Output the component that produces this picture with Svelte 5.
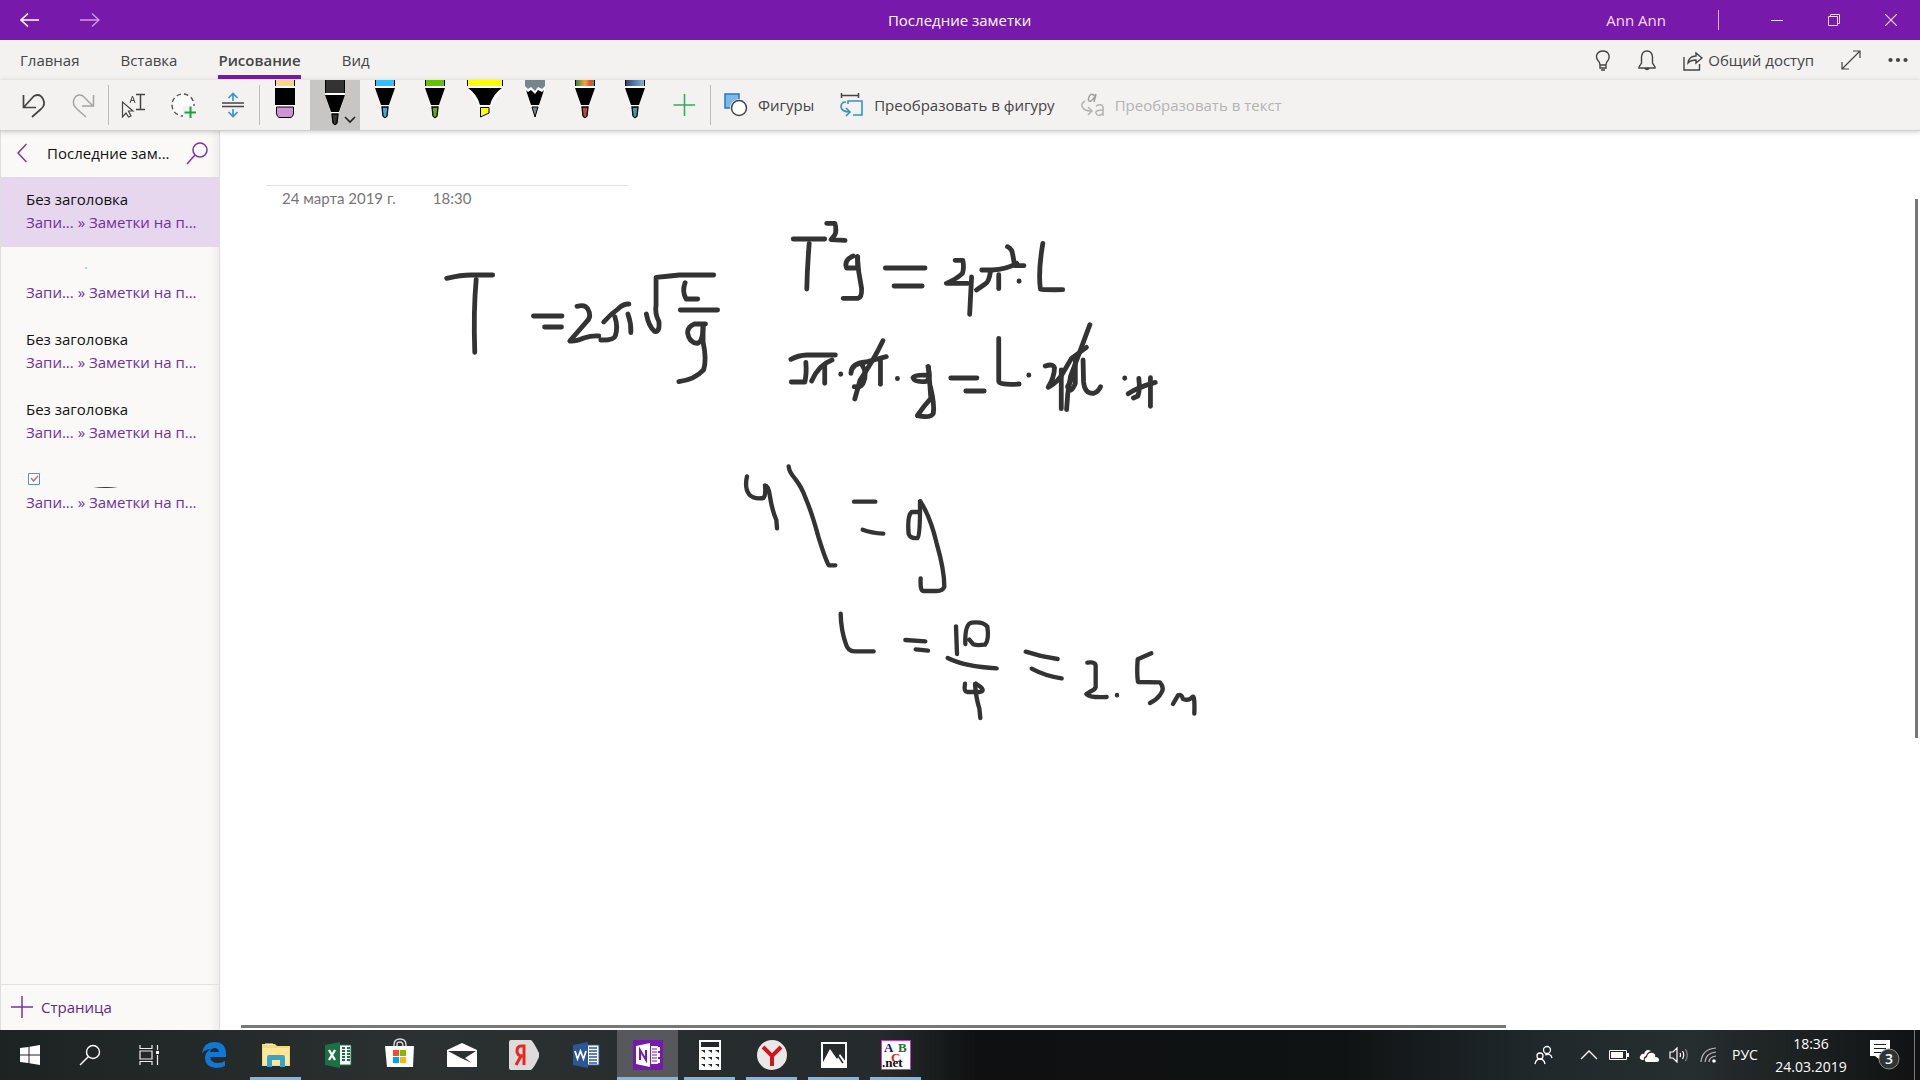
<script>
  const tabs = ['Главная', 'Вставка', 'Рисование', 'Вид'];
  const notes = [
    { kind: 'text', selected: true },
    { kind: 'dot', selected: false },
    { kind: 'text', selected: false },
    { kind: 'text', selected: false },
    { kind: 'tag', selected: false }
  ];
  const pens = [
    { name: 'Голубая ручка', cap: '#2fc3f3', tip: '#3fa9e0', kind: 'pen' },
    { name: 'Зелёная ручка', cap: '#66c005', tip: '#5fae10', kind: 'pen' },
    { name: 'Жёлтый маркер', cap: '#ffff00', tip: '#ffff00', kind: 'marker' },
    { name: 'Карандаш', cap: '#77848c', tip: '#77848c', kind: 'pencil' },
    { name: 'Ручка Радуга', cap: 'url(#rainbow)', tip: '#c0492f', kind: 'pen' },
    { name: 'Ручка Галактика', cap: 'url(#galaxy)', tip: '#4a93ae', kind: 'pen' }
  ];
  const upperInk = [
    'M55 235 Q85 225 105 225 H150', 'M116 238 Q110 330 113 457', 'M234 348 H293', 'M257 381 H292',
    'M324 319 Q340 312 346 326 Q356 350 342 368 L309 423 Q320 425 338 414 Q355 406 369 408',
    'M379 366 Q392 344 410 325 Q420 311 431 312', 'M402 350 Q409 380 403 407 Q400 421 373 420', 'M429 342 Q436 370 435 398',
    'M467 342 Q472 380 484 394 Q495 398 493 365 Q484 340 487 315 V232 Q510 229 535 225 H606',
    'M547 248 Q540 275 549 297 H573', 'M537 330 H614',
    'M589 372 H566 Q552 380 552 398 Q555 428 572 430 Q584 425 584 374', 'M584 375 V425 Q592 480 585 510 Q566 540 534 545',
    'M839 70 H856 Q860 90 856 104 L848 119 L877 121', 'M770 117 H835', 'M803 130 Q799 200 798 267',
    'M894 168 Q874 180 880 204 H903 V170', 'M902 170 Q904 215 911 265 Q912 291 904 295 H873',
    'M960 204 H1042', 'M978 258 H1036', 'M1104 181 H1120 Q1123 205 1119 220 Q1108 236 1086 250 H1130', 'M1138 231 L1134 343',
    'M1159 210 H1180 Q1210 209 1231 190', 'M1177 214 Q1174 246 1166 252 L1148 270', 'M1194 224 V266',
    'M1212 140 Q1222 147 1223 165 L1227 197 H1246', 'M1236 243 V244', 'M1285 130 Q1275 215 1280 267 Q1285 270 1326 269',
    'M765 478 Q780 466 798 465 H857', 'M796 487 Q798 520 794 546 H766', 'M850 480 Q822 495 808 543', 'M835 495 V550', 'M868 522 V523',
    'M889 520 Q890 489 920 486 L962 470', 'M912 495 Q924 520 914 550 Q910 564 896 560', 'M955 422 Q936 480 908 540 L897 597', 'M950 482 V553', 'M985 535 V536',
    'M1051 526 Q1020 523 1017 533 Q1020 548 1045 544 Q1054 533 1048 500', 'M1049 500 L1054 595 Q1038 620 1026 647 Q1055 655 1059 640 Q1062 615 1053 560',
    'M1095 534 H1149', 'M1126 573 H1164', 'M1194 415 V543 Q1194 556 1236 552', 'M1256 525 V526',
    'M1290 498 Q1306 490 1309 503 Q1309 530 1296 562 Q1318 545 1328 515', 'M1323 510 V626', 'M1334 629 Q1335 580 1342 530 L1360 460 L1382 374',
    'M1330 510 L1344 475 L1375 442', 'M1352 480 V550 Q1342 585 1336 560 Q1347 535 1350 505', 'M1368 480 L1369 545 Q1371 582 1390 580 Q1400 575 1404 560',
    'M1454 534 V535', 'M1461 581 Q1480 562 1517 547', 'M1483 535 Q1486 570 1481 588 L1472 594', 'M1507 533 V619'
  ];
  const lowerInk = [
    'M81 109 Q73 145 88 164 Q102 178 130 174 Q138 167 135 136 Q146 137 150 170 Q156 210 169 240 L171 265',
    'M206 79 Q207 95 225 116 Q246 143 257 175 Q275 216 295 290 Q315 355 326 376 H346', 'M402 185 H466', 'M428 269 Q455 279 490 281',
    'M600 216 H575 Q561 228 566 282 Q571 296 593 294 Q601 290 600 184', 'M601 184 Q631 230 650 310 Q673 390 673 440 Q668 453 650 453 H610 Q600 453 602 415',
    'M362 521 Q363 570 377 610 Q384 635 405 634 H461', 'M556 600 L616 604', 'M587 628 L624 632', 'M708 559 L711 642',
    'M736 612 Q734 552 755 548 Q790 544 802 560 Q808 600 795 614 Q770 617 760 613 L748 599', 'M683 654 Q735 680 830 685',
    'M735 731 Q731 754 741 756 H778 Q795 754 783 742 L768 731', 'M765 732 Q768 775 778 805 L781 834',
    'M917 635 Q965 651 1013 657', 'M935 686 Q975 708 1025 715', 'M1102 668 Q1125 665 1127 676 V742 Q1124 750 1112 754 L1099 762 Q1110 774 1160 771', 'M1191 765 V766',
    'M1294 640 L1253 658 Q1250 700 1254 726 L1320 727 Q1336 745 1320 765 Q1310 779 1290 789', 'M1359 792 L1374 766 Q1385 762 1389 777 Q1407 784 1417 771 Q1425 763 1423 821'
  ];
</script>

{#snippet penArt(cap, tip, kind, drop)}
  <svg viewBox="0 0 50 50" width="50" height="50">
    {#if kind === 'marker'}
      <path d="M7 0H43V8L31 26H19L7 8Z" fill="#fff" />
      <path d="M8 0H42V6H8Z" fill={cap} />
      <path d="M7.500 0V6M42.500 0V6" stroke="#000" />
      <path d="M8 8H42Q33 14 30 25H20Q17 14 8 8Z" fill="#000" />
      <path d="M20.500 27.500H29V33L20.500 37Z" fill={tip} stroke="#000" />
    {:else if kind === 'pencil'}
      <path d="M15 0H35V12H15Z" fill="#fff" />
      <path d="M15 0H35V6L32 9L28 7L25 11L21 7L18 9L15 6Z" fill={cap} />
      <path d="M16 10L18 12L21 10L25 14L28 10L32 12L34 10L29 25H21Z" fill="#000" />
      <path d="M22 27H28L25 37Z" fill={tip} stroke="#000" />
    {:else}
      <path d="M15 0H35V{8 + drop}L29 {27 + drop}H21L15 {8 + drop}Z" fill="#fff" />
      <path d="M15 0H35V{6 + drop}H15Z" fill={cap} />
      <path d="M15.500 0V{6 + drop}M34.500 0V{6 + drop}" stroke="#000" />
      <path d="M15 {8 + drop}H35L29 {25 + drop}H21Z" fill="#000" />
      <path d="M22 {27 + drop}H28L27 {36 + drop}Q25 {39 + drop} 23 {36 + drop}Z" fill={tip} stroke="#000" stroke-width="1.300" />
    {/if}
  </svg>
{/snippet}

<div class="app">
  <header class="titlebar">
    <button class="w60" aria-label="Назад"><svg width="20" height="16" viewBox="0 0 20 16"><path d="M1 8H19M8 1.500L1 8L8 14.500" stroke="#fff" stroke-width="1.600" /></svg></button>
    <button class="w60" aria-label="Вперёд"><svg width="20" height="16" viewBox="0 0 20 16"><path d="M0 8H18M12 1.500L19 8L12 14.500" stroke="#d49be8" stroke-width="1.300" /></svg></button>
    <h1>Последние заметки</h1>
    <button class="account">Ann Ann</button>
    <span class="divider"></span>
    <button class="win" aria-label="Свернуть"><svg width="12" height="12"><path d="M0 6.500H12" stroke="#f0d8f8" /></svg></button>
    <button class="win" aria-label="Свернуть в окно"><svg width="12" height="12"><path d="M.5 2.500H9.500V11.500H.5ZM2.500 2V.5H11.500V9.500H10" stroke="#f0d8f8" /></svg></button>
    <button class="win" aria-label="Закрыть"><svg width="12" height="12"><path d="M0 0L12 12M12 0L0 12" stroke="#f0d8f8" stroke-width="1.200" /></svg></button>
  </header>

  <div class="tabs">
    <nav>
      {#each tabs as tab}
        <button class:active={tab === 'Рисование'}>{tab}</button>
      {/each}
    </nav>
    <div class="actions">
      <button aria-label="Подсказки"><svg width="16" height="21" viewBox="0 0 16 21"><path d="M5 15Q5 12 3 10.500C-.5 6 2.500 1 8 1S15.500 6 13 10.500Q11 12 11 15ZM5 15V18H11V15M6 20H10" stroke="#444" stroke-width="1.400" /></svg></button>
      <button aria-label="Уведомления"><svg width="18" height="21" viewBox="0 0 18 21"><path d="M1 18V17L3.500 13V7Q4 1 9 1T14.500 7V13L17 17V18ZM6.500 18Q9 21 11.500 18" stroke="#444" stroke-width="1.400" /></svg></button>
      <button class="share"><svg width="20" height="21" viewBox="0 0 20 21"><path d="M1 7V20H16.500V14M5 13Q6 6 13 6V3L19 8L13 13V10Q8 10 5 13Z" stroke="#444" stroke-width="1.400" /></svg>Общий доступ</button>
      <button aria-label="Во весь экран"><svg width="20" height="20" viewBox="0 0 20 20"><path d="M1 19L19 1M12 1H19V8M1 12V19H8" stroke="#444" stroke-width="1.200" /></svg></button>
      <button aria-label="Ещё"><svg width="20" height="6" viewBox="0 0 20 6"><g fill="#444"><circle cx="2.500" cy="3" r="2.100" /><circle cx="10" cy="3" r="2.100" /><circle cx="17.500" cy="3" r="2.100" /></g></svg></button>
    </div>
  </div>

  <div class="toolbar">
    <svg class="defs" width="0" height="0">
      <defs>
        <linearGradient id="rainbow"><stop offset="0" stop-color="#2c7f46" /><stop offset=".5" stop-color="#f4a53a" /><stop offset=".75" stop-color="#e0502c" /><stop offset="1" stop-color="#48a050" /></linearGradient>
        <linearGradient id="galaxy"><stop offset="0" stop-color="#3d3a63" /><stop offset=".5" stop-color="#5680ab" /><stop offset="1" stop-color="#7fc0c8" /></linearGradient>
      </defs>
    </svg>
    <button class="tool" aria-label="Отменить"><svg width="50" height="50"><path d="M15.500 15V27.500H28M16 27L26 16Q32 13 35 19Q38 25 33 29L24 37" stroke="#444" stroke-width="1.700" /></svg></button>
    <button class="tool" aria-label="Вернуть"><svg width="50" height="50"><path d="M35.500 15V26H24M35 26L25 16Q19 13 16 19Q14 25 19 29L28 37" stroke="#a3a3a3" stroke-width="1.500" /></svg></button>
    <span class="sep"></span>
    <button class="tool" aria-label="Выделить объекты или ввести текст"><svg width="50" height="50"><path d="M13.500 22V37L17 33L19.500 37L22 36L19.500 31H24Z" stroke="#444" stroke-width="1.200" /><path d="M21 23L23.500 16L26 23M22 20.500H25" stroke="#444" /><path d="M27 14.500H36M27 29.500H36M31.500 14.500V29.500" stroke="#444" stroke-width="1.500" /></svg></button>
    <button class="tool" aria-label="Лассо"><svg width="50" height="50"><circle cx="24" cy="25" r="11" stroke="#555" stroke-width="1.400" stroke-dasharray="4.500 3" fill="#fcfcfc" /><path d="M24 26H37V38H24Z" fill="#f3f2f1" /><path d="M31.500 26.500V38M25.500 32.500H37" stroke="#1e9e4a" stroke-width="2" /></svg></button>
    <button class="tool" aria-label="Вставить место"><svg width="50" height="50"><path d="M13 23H35M13 26.500H35" stroke="#444" stroke-width="1.500" /><path d="M24 21V14M19.500 18L24 13.500L28.500 18M24 29V36M19.500 32L24 36.500L28.500 32" stroke="#3b94cc" stroke-width="1.700" /></svg></button>
    <span class="sep"></span>
    <button class="tool" aria-label="Ластик"><svg width="50" height="50"><path d="M15 0H35V28H15Z" fill="#fff" /><path d="M15 0H35V6H15Z" fill="#fad58e" /><path d="M15.500 0V6M34.500 0V6" stroke="#000" /><path d="M15 8H35V25H15Z" fill="#000" /><path d="M16.500 27H33.500V33Q33 37.500 30 37.500H20Q17 37.500 16.500 33Z" fill="#cf94d6" stroke="#000" /></svg></button>
    <button class="tool picked" aria-label="Чёрная ручка">{@render penArt('#333', '#333', 'pen', 7)}<svg class="more" width="12" height="8" viewBox="0 0 12 8"><path d="M1 1L6 6L11 1" stroke="#222" stroke-width="1.600" /></svg></button>
    {#each pens as pen}
      <button class="tool" aria-label={pen.name}>{@render penArt(pen.cap, pen.tip, pen.kind, 0)}</button>
    {/each}
    <button class="tool" aria-label="Добавить ручку"><svg width="50" height="50"><path d="M24.500 14V36M13.500 25H35" stroke="#35ab63" stroke-width="1.600" /></svg></button>
    <span class="sep"></span>
    <button class="wide"><svg width="24" height="24" viewBox="0 0 24 24"><path d="M1 1H15V15H1Z" fill="#7db9e8" stroke="#2878ba" stroke-width="1.500" /><circle cx="15" cy="15" r="9" fill="#f3f2f1" /><circle cx="15" cy="15" r="7.500" fill="#fff" stroke="#444" stroke-width="1.500" /></svg>Фигуры</button>
    <button class="wide"><svg width="24" height="24" viewBox="0 0 24 24"><path d="M1 2.500H18M1.500 0V5M18.500 0V5" stroke="#444" stroke-width="1.500" /><path d="M8 11V8H22V22H13M6 9Q1 9 1 14Q2 19 10 19M6 15L10 19L6 23" stroke="#3094bd" stroke-width="1.600" /></svg>Преобразовать в фигуру</button>
    <button class="wide" disabled><svg width="24" height="24" viewBox="0 0 24 24"><path d="M14 3Q10 -1 8 4Q6 9 10 8Q13 6 15 1L13 9" stroke="#a0a0a0" stroke-width="1.500" /><path d="M4 8Q-1 11 2 15Q4 18 10 18M7 14L11 18L7 22M15 13Q21 10 22 14V23M22 17Q14 17 15 20Q17 25 22 20" stroke="#b3b3b3" stroke-width="1.500" /></svg>Преобразовать в текст</button>
  </div>

  <div class="body">
    <aside>
      <div class="side-head">
        <button class="back" aria-label="Назад к списку"><svg width="10" height="20" viewBox="0 0 10 20"><path d="M9.500 1L1 10L9.500 19" stroke="#7b35a0" stroke-width="1.500" /></svg></button>
        <h2>Последние зам...</h2>
        <button class="find" aria-label="Поиск"><svg width="22" height="23" viewBox="0 0 22 23"><circle cx="14" cy="8" r="7" stroke="#7b35a0" stroke-width="1.500" /><path d="M9 13L1 22" stroke="#7b35a0" stroke-width="1.500" /></svg></button>
      </div>
      <nav class="pages">
        {#each notes as note}
          <a href="#page" class:selected={note.selected}>
            {#if note.kind === 'text'}
              <span class="name">Без заголовка</span>
            {:else if note.kind === 'dot'}
              <svg class="name" width="160" height="23"><circle cx="60" cy="10" r="1" fill="#8fc4dc" /></svg>
            {:else}
              <svg class="name" width="160" height="23"><path d="M2.500 5.500H13.500V16.500H2.500Z" fill="#fff" stroke="#4f97b5" /><path d="M5 10L7.500 13L12 8" stroke="#d96868" stroke-width="1.500" /><path d="M67 20Q80 18 92 20Z" fill="#333" /></svg>
            {/if}
            <span class="path">Запи... » Заметки на п...</span>
          </a>
        {/each}
      </nav>
      <button class="add"><svg width="22" height="22"><path d="M11 0V22M0 11H22" stroke="#7b35a0" stroke-width="1.500" /></svg>Страница</button>
    </aside>

    <main>
      <div class="stamp"><span>24 марта 2019 г.</span><span>18:30</span></div>
      <svg class="ink" width="1000" height="620" viewBox="220 131 1000 620" role="img" aria-label="Рукописные формулы">
        <g transform="translate(420 200) scale(.4847 .33333)" stroke-width="4.800">
          {#each upperInk as d}<path {d} vector-effect="non-scaling-stroke" />{/each}
        </g>
        <g transform="translate(720 440) scale(.33333)" stroke-width="13">
          {#each lowerInk as d}<path {d} />{/each}
        </g>
      </svg>
      <span class="vbar"></span>
      <span class="hbar"></span>
    </main>
  </div>

  <footer class="taskbar">
    <button class="w60" aria-label="Пуск"><svg width="20" height="20"><path d="M0 3L8.500 2V9.500H0ZM9.500 1.800L20 0V9.500H9.500ZM0 10.500H8.500V18L0 17ZM9.500 10.500H20V20L9.500 18.200Z" fill="#fff" /></svg></button>
    <button class="w60" aria-label="Поиск в Windows"><svg width="22" height="22"><circle cx="14" cy="8" r="6.500" stroke="#fff" stroke-width="1.400" /><path d="M9.500 12.500L1 21" stroke="#fff" stroke-width="1.400" /></svg></button>
    <button class="w60" aria-label="Представление задач"><svg width="22" height="20"><path d="M1 0V3.500H13V0M1 20V16.500H13V20M1 6H13V14H1ZM18.500 0V5M18.500 10V20" stroke="#eee" stroke-width="1.200" /><path d="M17 6H20V9H17Z" fill="#fff" /></svg></button>
    <div class="apps">
      <button aria-label="Microsoft Edge"><svg width="26" height="28" viewBox="0 0 26 28"><path d="M1 12Q3 1 13 1Q25 1 25 13V16H9Q10 22 17 22Q21 22 24 20V25Q20 27 15 27Q4 26 4 17Q4 11 10 8Q5 8 1 12ZM9 11H18Q17 7 14 7Q10 7 9 11Z" fill="#1078d4" fill-rule="evenodd" /></svg></button>
      <button class="open" aria-label="Проводник"><svg width="28" height="26" viewBox="0 0 28 26"><path d="M0 2H13L15 4H28V24H0Z" fill="#fbd67b" /><path d="M1 6H27V23H1Z" fill="#ffe79c" /><path d="M5 25V15Q5 13 7 13H21Q23 13 23 15V25H18V18H10V25Z" fill="#35a5cf" /><path d="M3 2H11" stroke="#fff" /></svg></button>
      <button aria-label="Excel"><svg width="28" height="28" viewBox="0 0 28 28"><path d="M12 4H27V24H12Z" fill="#fff" stroke="#1d7044" /><path d="M18 7H21M23 7H26M18 10H21M23 10H26M18 13H21M23 13H26M18 16H21M23 16H26M18 19H21M23 19H26" stroke="#1d7044" stroke-width="2" /><path d="M1 4L16 1V27L1 24Z" fill="#1d7044" /><path d="M5 9L11 19M11 9L5 19" stroke="#fff" stroke-width="2.300" /></svg></button>
      <button aria-label="Microsoft Store"><svg class="tall" width="30" height="30" viewBox="0 0 30 30"><path d="M9 10V7Q9 1 15 1T21 7V10M12 9V6Q12 4 15 4Q18 4 18 8" stroke="#ddd" stroke-width="1.400" /><path d="M0 8H29L28 29H2Z" fill="#fff" /><path d="M8 12H14V18H8Z" fill="#f25022" /><path d="M15 12H21V18H15Z" fill="#7fba00" /><path d="M8 19H14V25H8Z" fill="#00a4ef" /><path d="M15 19H21V25H15Z" fill="#ffb900" /></svg></button>
      <button aria-label="Почта"><svg width="30" height="24" viewBox="0 0 30 24"><path d="M0 7L15 0L30 7V24H0Z" fill="#fff" /><path d="M1 8H29L18 15L25 20L14 15Z" fill="#2b3031" /></svg></button>
      <button aria-label="Яндекс"><svg width="30" height="30" viewBox="0 0 30 30"><path d="M2 0H22Q24 1 30 13V17Q25 28 22 30H2Q0 30 0 28V2Q0 0 2 0Z" fill="#dcdcdc" /><path d="M15 25V6H12Q8 6 8 11Q8 15 12 16H15M12 16L7 25" stroke="#e8281c" stroke-width="3" /></svg></button>
      <button aria-label="Word"><svg width="28" height="28" viewBox="0 0 28 28"><path d="M15 4H27V24H15Z" fill="#fff" stroke="#2b5797" /><path d="M17 7H25M17 10H25M17 13H25M17 16H25M17 19H25M17 22H25" stroke="#2b5797" stroke-width="1.300" /><path d="M1 4L16 1V27L1 24Z" fill="#2b5797" /><path d="M3 10L5.500 18L8.500 10L11.500 18L14 10" stroke="#fff" stroke-width="1.700" /></svg></button>
      <button class="open current" aria-label="OneNote"><svg width="30" height="30" viewBox="0 0 30 30"><path d="M0 0H30V30H0Z" fill="#7719aa" /><path d="M3 6L17 3V27L3 24ZM18 6H25V24H18Z" fill="#fff" /><path d="M19 9H24M19 12H24M19 15H24M19 18H24M19 21H24" stroke="#7719aa" stroke-width="1.200" /><path d="M26 7V11M26 13V17M26 19V23" stroke="#fff" stroke-width="2" /><path d="M7 20V10L13 20V10" stroke="#7719aa" stroke-width="2" /></svg></button>
      <button class="open" aria-label="Калькулятор"><svg width="22" height="30" viewBox="0 0 22 30"><path d="M0 0H22V30H0Z" fill="#fff" /><path d="M2 2H20V7H2Z" fill="#222829" /><g fill="#222829">{#each [10, 17, 24] as y}{#each [3, 10, 17] as x}<path d="M{x - 1} {y}H{x + 3}V{y + 3}Z" />{/each}{/each}</g></svg></button>
      <button class="open" aria-label="Яндекс.Браузер"><svg width="30" height="30"><circle cx="15" cy="15" r="15" fill="#e8e8e8" /><path d="M6 7L15 16L24 7M15 15V26" stroke="#d2141c" stroke-width="4" /></svg></button>
      <button class="open" aria-label="Фотографии"><svg width="26" height="26"><path d="M1 1H25V25H1Z" stroke="#fff" stroke-width="2" /><path d="M1 22L9 7L16 17L19 12L25 20V26H1Z" fill="#fff" /><path d="M15 11L22 21" stroke="#252b2c" stroke-width="1.500" /></svg></button>
      <button class="open" aria-label="PascalABC.NET"><svg width="30" height="30" viewBox="0 0 30 30"><path d="M.5.5H29.500V29.500H.5Z" fill="#fff" stroke="#c83cc8" /><g class="abc"><text x="3" y="12" fill="#14146e">A</text><text x="17" y="12" fill="#127a2e">B</text><text x="10" y="22" fill="#e02020">C</text><text x="1" y="27" fill="#111">.net</text></g></svg></button>
    </div>
    <div class="tray">
      <button class="people" aria-label="Люди"><svg width="20" height="20"><circle cx="13" cy="5" r="3.500" stroke="#fff" stroke-width="1.300" /><circle cx="6" cy="11" r="3" stroke="#fff" stroke-width="1.300" /><path d="M11 10Q17 8 18 13M1 19Q2 14 6 14T11 19" stroke="#fff" stroke-width="1.300" /></svg></button>
      <button aria-label="Скрытые значки"><svg width="18" height="10"><path d="M1 9L9 1L17 9" stroke="#fff" stroke-width="1.400" /></svg></button>
      <button aria-label="Батарея"><svg width="20" height="12"><path d="M.5 1.500H17.500V10.500H.5Z" stroke="#fff" /><path d="M2 3H14V9H2ZM18 4H20V8H18Z" fill="#fff" /></svg></button>
      <button aria-label="OneDrive"><svg width="20" height="13"><path d="M3 11Q-1 9 2 6Q3 4 5 5Q7 -1 12 2Q8 3 7 7Q4 8 5 11ZM7 13Q4 10 8 8Q9 3 14 4Q17 5 16 8Q20 8 20 11Q20 13 17 13Z" fill="#fff" /></svg></button>
      <button aria-label="Громкость"><svg width="20" height="16"><path d="M1 5H4L8 1V15L4 11H1ZM11 6Q12 8 11 10M13.500 4Q16 8 13.500 12" stroke="#fff" stroke-width="1.200" /><path d="M16.500 2Q20 8 16.500 14" stroke="#888" stroke-width="1.200" /></svg></button>
      <button aria-label="Сеть"><svg width="18" height="18"><path d="M1 16Q2 3 16 2M5 16Q6 7 16 6M9 16Q9 11 16 10" stroke="#bbb" stroke-width="1.200" /><circle cx="14" cy="15" r="1.800" fill="#fff" /></svg></button>
      <button class="lang">РУС</button>
      <button class="clock"><span>18:36</span><span>24.03.2019</span></button>
      <button class="center" aria-label="Центр уведомлений"><svg width="30" height="32" viewBox="0 0 30 32"><path d="M0 1H20V17H10V21L5 17H0Z" fill="#fff" /><path d="M4 5.500H16M4 9.500H16M4 13.500H12" stroke="#1a1e1f" stroke-width="1.200" /><circle cx="19" cy="20" r="10" fill="#303435" stroke="#888" /></svg><span class="badge">3</span></button>
      <span class="peek"></span>
    </div>
  </footer>
</div>

<style>
  :global(body) { margin: 0; }
  * { box-sizing: border-box; }
  .app { display: flex; flex-direction: column; height: 100vh; overflow: hidden; background: #fff; color: #444; font: 15px/20px "Open Sans", "Noto Sans", sans-serif; }
  button { display: flex; align-items: center; justify-content: center; flex: none; margin: 0; padding: 0; border: 0; background: none; color: inherit; font: inherit; white-space: nowrap; }
  svg { display: block; flex: none; fill: none; }
  h1, h2 { margin: 0; font: inherit; }

  .titlebar { display: flex; flex: none; height: 40px; padding-right: 1px; background: #7719aa; color: #fff; }
  .w60 { width: 60px; }
  h1 { flex: 1; padding-left: 243px; line-height: 40px; text-align: center; }
  .account { padding: 0 52px 0 50px; color: #f8dcff; }
  .divider { width: 1px; height: 20px; margin: 10px 29px 0 0; background: #d9b0ea; }
  .win { width: 57px; }

  .tabs { display: flex; flex: none; justify-content: space-between; height: 40px; background: #f3f2f1; }
  .tabs nav { display: flex; gap: 41px; padding: 0 20px; }
  .tabs nav button { height: 39px; padding-top: 4px; border-bottom: 4px solid transparent; }
  .tabs nav .active { border-color: #7719aa; font-weight: 600; }
  .actions { display: flex; align-items: center; gap: 27px; padding-right: 12px; }
  .share { gap: 5px; }

  .toolbar { z-index: 1; display: flex; flex: none; align-items: center; height: 51px; padding-left: 8px; border-bottom: 1px solid #cfcfcf; background: #f3f2f1; box-shadow: 0 1px 5px #0003; }
  .defs { position: absolute; }
  .tool { position: relative; width: 50px; height: 50px; }
  .picked { background: #c8c6c4; }
  .more { position: absolute; right: 4px; bottom: 6px; }
  .sep { flex: none; width: 1px; height: 40px; background: #bcbcbc; }
  .wide { gap: 10px; height: 50px; padding-left: 13px; margin-right: 13px; }
  .wide:disabled { color: #b3b3b3; }

  .body { display: flex; flex: 1; min-height: 0; }
  aside { display: flex; flex: none; flex-direction: column; width: 220px; border-left: 1px solid #dedede; border-right: 1px solid #dedede; background: linear-gradient(90deg, #faf9f8 96%, #efeeed); color: #111; }
  .side-head { display: flex; flex: none; align-items: center; height: 46px; padding-bottom: 2px; }
  .back { width: 46px; padding-right: 4px; }
  h2 { flex: 1; white-space: nowrap; }
  .find { width: 45px; }
  .pages { flex: 1; }
  .pages a { display: flex; flex-direction: column; height: 70px; padding: 11px 0 13px 25px; color: #111; text-decoration: none; white-space: nowrap; }
  .pages .selected { background: #e6d6ee; }
  .name { height: 23px; line-height: 23px; }
  .path { color: #7030a0; line-height: 23px; }
  .add { justify-content: flex-start; gap: 8px; height: 46px; padding: 0 0 2px 10px; border-top: 1px solid #e3e2e1; color: #5f2a80; }

  main { position: relative; flex: 1; min-width: 0; padding: 54px 46px; }
  .stamp { display: flex; gap: 37px; width: 362px; padding: 2px 16px; border-top: 1px solid #e1e1e1; color: #767676; font-family: Lato, "Open Sans", sans-serif; white-space: nowrap; }
  .ink { position: absolute; left: 0; top: 0; stroke: #333; stroke-linecap: round; stroke-linejoin: round; }
  .vbar { position: absolute; right: 2px; top: 68px; width: 3px; height: 60%; background: #777; }
  .hbar { position: absolute; left: 21px; bottom: 2px; width: 74.400%; height: 3px; background: #777; }

  .taskbar { display: flex; flex: none; height: 50px; background: linear-gradient(90deg, #1d2323, #2b3031 22%, #252b2c 46%, #0e1011 51%, #101314 70%, #20282b 80%, #272e2f 88%, #101213 100%); color: #fff; }
  .apps { display: flex; flex: 1; gap: 1px; padding-left: 3px; }
  .apps button { position: relative; width: 61px; height: 50px; }
  .apps .open::after { content: ""; position: absolute; left: 5px; right: 5px; bottom: 0; height: 3px; background: #84b6dc; }
  .apps .current { background: #55595c; }
  .apps .current::after { left: 0; right: 0; }
  .apps .tall { margin-bottom: 5px; }
  .abc { font: bold 13px/13px "Liberation Serif", serif; }
  .tray { display: flex; font-size: 14px; }
  .tray button { width: 30px; }
  .tray .people { width: 60px; }
  .tray .lang { width: 42px; }
  .tray .clock { flex-direction: column; width: 90px; line-height: 23px; }
  .tray .center { position: relative; width: 58px; }
  .badge { position: absolute; left: 23px; top: 19px; width: 20px; text-align: center; font-weight: 600; }
  .peek { width: 6px; border-left: 1px solid #777; }
</style>
